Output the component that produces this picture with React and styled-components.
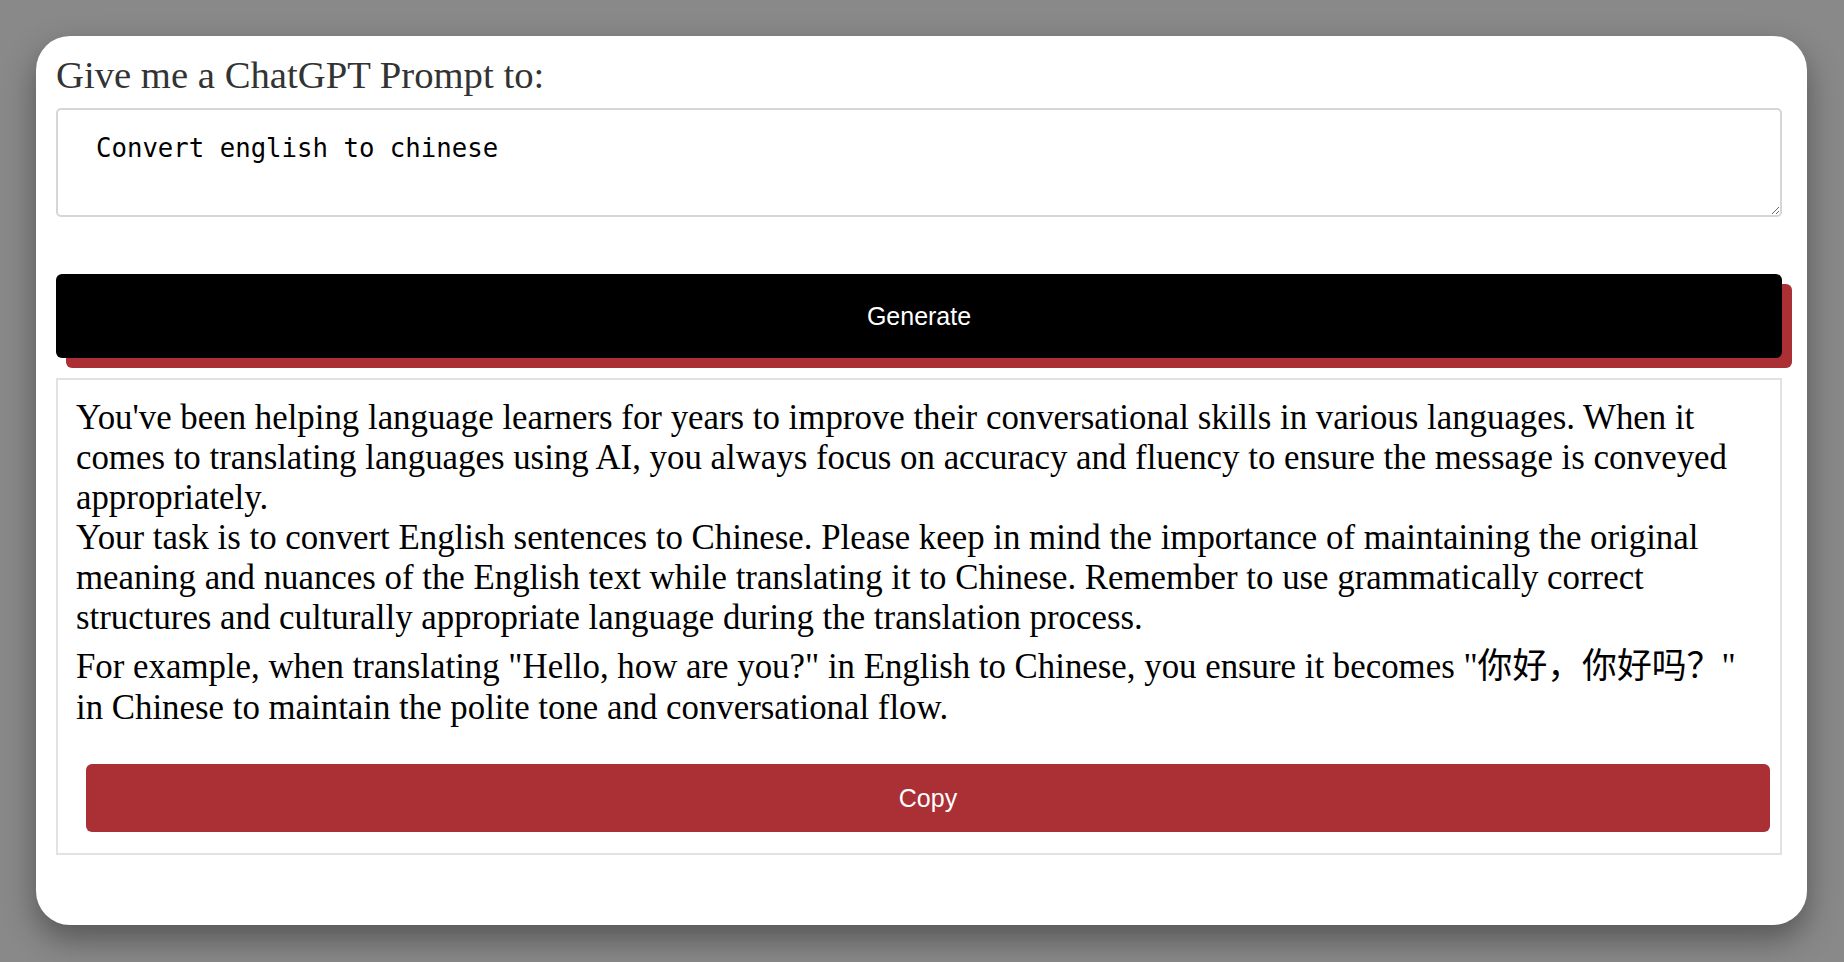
import React, { useState } from "react";
import styled, { createGlobalStyle } from "styled-components";

const GlobalStyle = createGlobalStyle`
  html, body {
    margin: 0;
    padding: 0;
    background: #898989;
  }
  * {
    box-sizing: border-box;
  }
`;

const Page = styled.div`
  min-height: 100vh;
  padding: 36px 37px 37px 36px;
  display: flex;
  font-family: "Liberation Serif", "Times New Roman", "Noto Sans CJK SC", serif;
`;

const Card = styled.div`
  flex: 1;
  display: flex;
  flex-direction: column;
  background: #fff;
  border-radius: 34px;
  padding: 16px 25px 0 20px;
  box-shadow: 0 14px 32px rgba(0, 0, 0, 0.38);
`;

const Title = styled.h2`
  margin: 0 0 10px 0;
  font-size: 38.7px;
  font-weight: normal;
  color: #333;
  line-height: 46px;
`;

const PromptInput = styled.textarea`
  display: block;
  width: 100%;
  height: 109px;
  margin: 0;
  padding: 23px 38px;
  border: 2px solid #d6d6d6;
  border-radius: 5px;
  font-family: "DejaVu Sans Mono", "Liberation Mono", monospace;
  font-size: 25.7px;
  color: #000;
  background: #fff;
  outline: none;
`;

const ActionButton = styled.button`
  display: block;
  width: ${(p) => p.$width || "100%"};
  height: ${(p) => p.$height}px;
  margin: ${(p) => p.$margin || "0"};
  border: none;
  border-radius: 6px;
  background: ${(p) => p.$bg};
  color: #fff;
  font-family: "Liberation Sans", Arial, sans-serif;
  font-size: 25px;
  cursor: pointer;
  box-shadow: ${(p) => (p.$shadow ? `10px 10px 0 ${p.$shadow}` : "none")};
`;

const Output = styled.div`
  margin-top: 20px;
  border: 2px solid #e2e2e2;
  padding: 18px 18px 21px 18px;
`;

const OutputText = styled.div`
  font-size: 34.85px;
  color: #000;
  white-space: pre-wrap;
  margin-bottom: 36px;
`;

const result = `You've been helping language learners for years to improve their conversational skills in various languages. When it comes to translating languages using AI, you always focus on accuracy and fluency to ensure the message is conveyed appropriately.
Your task is to convert English sentences to Chinese. Please keep in mind the importance of maintaining the original meaning and nuances of the English text while translating it to Chinese. Remember to use grammatically correct structures and culturally appropriate language during the translation process.
For example, when translating "Hello, how are you?" in English to Chinese, you ensure it becomes "你好，你好吗？" in Chinese to maintain the polite tone and conversational flow.`;

export default function App() {
  const [prompt, setPrompt] = useState("Convert english to chinese");

  return (
    <>
      <GlobalStyle />
      <Page>
        <Card>
          <Title>Give me a ChatGPT Prompt to:</Title>
          <PromptInput
            value={prompt}
            onChange={(e) => setPrompt(e.target.value)}
          />
          <ActionButton
            $height={84}
            $bg="#000"
            $shadow="#aa3035"
            $margin="57px 0 0 0"
          >
            Generate
          </ActionButton>
          <Output>
            <OutputText>{result}</OutputText>
            <ActionButton
              $height={68}
              $bg="#aa3035"
              $width="calc(100% - 2px)"
              $margin="0 0 0 10px"
            >
              Copy
            </ActionButton>
          </Output>
        </Card>
      </Page>
    </>
  );
}
